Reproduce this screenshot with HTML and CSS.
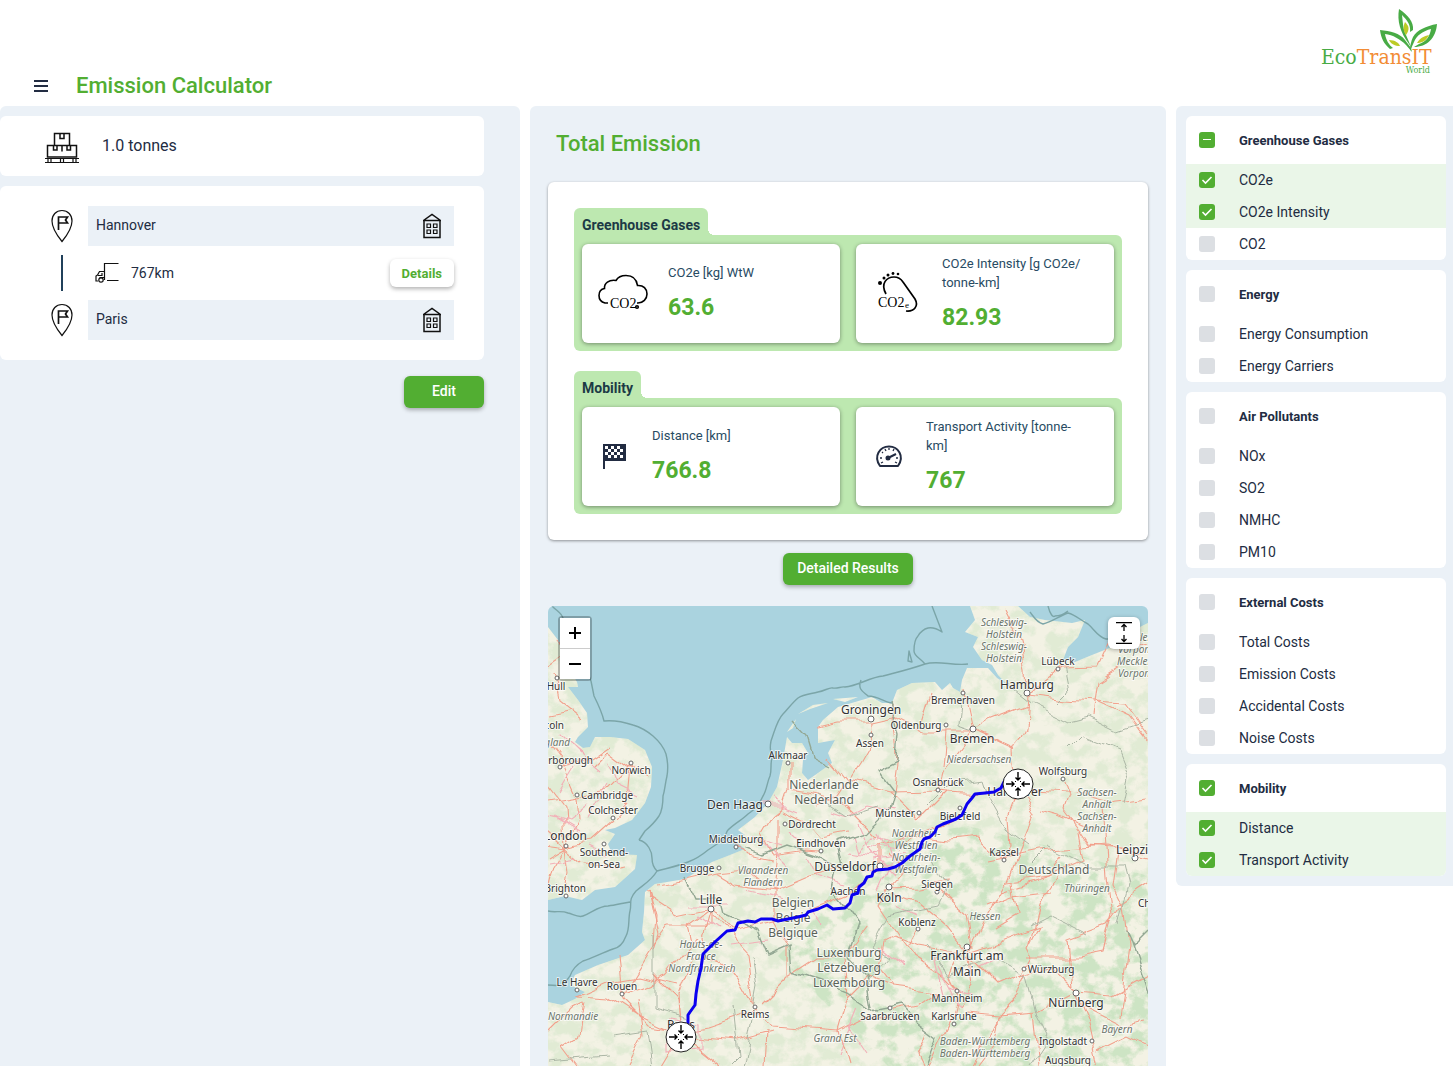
FILE: index.html
```html
<!DOCTYPE html>
<html lang="en">

<head>
    <meta charset="utf-8">
    <title>Emission Calculator</title>
    <link rel="stylesheet" href="styles.css">
</head>

<body>
    <svg class="sprite" aria-hidden="true">
        <symbol id="pin" viewBox="0 0 22 34">
            <path d="M11 1.500C5 1.500 1 6 1 12c0 7 5.500 15 10 20.500C15.500 27 21 19 21 12 21 6 17 1.500 11 1.500z" />
            <path d="M7.500 21V8h9l-2 3 2 3h-9" stroke-width="1.700" />
        </symbol>
        <symbol id="building" viewBox="0 0 18 26">
            <path d="M1 7v17.500h16V7M.500 7.500h17L9 1.500z" stroke-width="1.500" />
            <path d="M4 11h3.500v3.500H4zM10.500 11H14v3.500h-3.500zM4 17h3.500v3.500H4zM10.500 17H14v3.500h-3.500z" />
        </symbol>
        <symbol id="target" viewBox="-16 -16 32 32">
            <circle r="15" fill="#fff" stroke="#222" stroke-width="1" />
            <path d="M0-12v8M-2.500-6.500 0-4l2.500-2.500M0 12V4M-2.500 6.500 0 4l2.500 2.500M-12 0h8M-6.500-2.500-4 0l-2.500 2.500M12 0H4M6.500-2.500 4 0l2.500 2.500" fill="none" stroke="#000" stroke-width="1.400" />
            <path d="M-3-3l1 1M3-3l-1 1M-3 3l1-1M3 3l-1-1" stroke="#000" stroke-width="1" />
        </symbol>
    </svg>

    <div class="app">
        <header class="header">
            <div class="title-bar">
                <button class="menu" type="button" aria-label="Menu"><span></span><span></span><span></span></button>
                <h1>Emission Calculator</h1>
            </div>
            <a href="#" class="logo" aria-label="EcoTransIT World">
                <svg width="120" height="68" viewBox="0 0 120 68">
                    <g fill="#48ab45">
                        <path d="M78 1c9 6 15 13 14 21l-3 2c1-7-3-12-8-17 1 8 1 14 4 20l6 14-3-5c-9-12-12-23-10-35z" />
                        <path d="M59 22c10 1 20 3 25 10l6 8 1 4-6-7c-6-6-13-10-21-11 1 6 4 11 8 14l-3 1c-6-5-9-11-10-19z" />
                        <path d="M116 16c-11 2-20 6-24 13-2 4-3 9-3 14l4-9c3-7 9-11 17-13-1 7-5 13-12 15l-5 3c13 0 22-9 23-23z" />
                    </g>
                    <g fill="#bccb25">
                        <path d="M84 14c4 4 5 7 1 13-3-4-3-8-1-13z" />
                        <path d="M68 32c6 0 10 3 11 6-5 0-9-2-11-6z" />
                        <path d="M108 27c-5 1-9 3-12 8 5 0 9-2 12-8z" />
                    </g>
                    <text x="0" y="56" class="logo-name"><tspan fill="#48ab45">Eco</tspan><tspan fill="#f28c35">TransIT</tspan></text>
                    <text x="109" y="65" class="logo-sub" text-anchor="end" fill="#48ab45">World</text>
                </svg>
            </a>
        </header>

        <main class="columns">
            <section class="panel request">
                <div class="card cargo">
                    <svg class="line-icon" width="34" height="32" viewBox="0 0 34 32">
                        <path d="M9.500 13V1.500h15V13M15 2v4.500h4V2M2.500 13.500h29V25h-29zM8.500 14v4h3.500v-4M17 14v5.500M22 14v4h3.500v-4" stroke-width="1.500" />
                        <path d="M0 26.500h34M0 30.500h34M3 27v3M6 27v3M15.500 27v3M18.500 27v3M28 27v3M31 27v3" />
                    </svg>
                    <span>1.0 tonnes</span>
                </div>
                <div class="card route">
                    <svg class="line-icon" width="22" height="34"><use href="#pin" /></svg>
                    <div class="place">Hannover <svg class="line-icon" width="18" height="26"><use href="#building" /></svg></div>
                    <div class="route-line"></div>
                    <div class="leg">
                        <svg class="line-icon" width="24" height="20" viewBox="0 0 24 20">
                            <path d="M23.500.500h-14V17M12 17.500h11.500M9 8.500H4.500L2.500 12 1 13v5h2M3 12.500h4V10M4.500 14.500h5" />
                            <circle cx="6" cy="17" r="2.200" />
                        </svg>
                        <span>767km</span>
                        <button type="button" class="btn btn-light">Details</button>
                    </div>
                    <svg class="line-icon" width="22" height="34"><use href="#pin" /></svg>
                    <div class="place">Paris <svg class="line-icon" width="18" height="26"><use href="#building" /></svg></div>
                </div>
                <button type="button" class="btn btn-edit">Edit</button>
            </section>

            <section class="panel results">
                <h2>Total Emission</h2>
                <div class="summary">
                    <div class="group">
                        <h3>Greenhouse Gases</h3>
                        <div class="tiles">
                            <div class="tile">
                                <svg width="50" height="40" viewBox="0 0 50 40" fill="none" stroke="#000" stroke-width="1.600">
                                    <path d="M10 29H7C3 28 1 25 1 21.500c0-4 2-6.500 5.500-7C6 9 11 5.500 18 6.500 20 3 24 1.500 28 1.500c6 0 10.500 3 11.500 10 6-.500 9.500 3.500 9.500 8.500s-4 9-9 9h-1" />
                                    <text x="12" y="34" class="icon-text">CO2</text>
                                    <circle cx="39" cy="33" r="1.300" />
                                </svg>
                                <div>
                                    <p>CO2e [kg] WtW</p>
                                    <strong>63.6</strong>
                                </div>
                            </div>
                            <div class="tile">
                                <svg width="50" height="44" viewBox="0 0 50 44" fill="none" stroke="#000" stroke-width="1.700">
                                    <path d="M14 22c-6-11 1-17 8-17 4 0 7 2 9 5l12 17c4 7-1 13-9 12" />
                                    <g fill="#000" stroke="none">
                                        <circle cx="8" cy="11" r="2" />
                                        <circle cx="12" cy="6" r="1.500" />
                                        <circle cx="16" cy="3" r="1.500" />
                                        <circle cx="21" cy="1.500" r="1.400" />
                                        <circle cx="26" cy="2" r="1.300" />
                                    </g>
                                    <text x="6" y="35" class="icon-text">CO2</text>
                                    <text x="33" y="36" class="icon-sub">e</text>
                                </svg>
                                <div>
                                    <p>CO2e Intensity [g CO2e/ tonne-km]</p>
                                    <strong>82.93</strong>
                                </div>
                            </div>
                        </div>
                    </div>
                    <div class="group">
                        <h3>Mobility</h3>
                        <div class="tiles">
                            <div class="tile">
                                <svg width="34" height="34" viewBox="0 0 34 34">
                                    <path d="M5 4h23v17H7v8H5z" fill="#222c42" />
                                    <path d="M7 6h3v3H7zM13 6h3v3h-3zM19 6h3v3h-3zM10 9h3v3h-3zM16 9h3v3h-3zM22 9h3v3h-3zM7 12h3v3H7zM13 12h3v3h-3zM19 12h3v3h-3zM10 15h3v3h-3zM16 15h3v3h-3zM22 15h3v3h-3z" fill="#fff" />
                                </svg>
                                <div>
                                    <p>Distance [km]</p>
                                    <strong>766.8</strong>
                                </div>
                            </div>
                            <div class="tile">
                                <svg width="34" height="34" viewBox="0 0 34 34" fill="none" stroke="#222c42" stroke-width="2">
                                    <path d="M8 26C1 16 8 6.500 17 6.500S33 16 26 26z" stroke-linejoin="round" />
                                    <circle cx="16" cy="18" r="1.500" fill="#222c42" />
                                    <path d="M16 18l8-4" />
                                    <path d="M8 18h2M24 18h2M10 12l1 1M13 9l1 2M17 8v2M22 9l-1 2M9 23l2-1M25 23l-2-1" stroke-width="1.300" />
                                </svg>
                                <div>
                                    <p>Transport Activity [tonne-km]</p>
                                    <strong>767</strong>
                                </div>
                            </div>
                        </div>
                    </div>
                </div>
                <button type="button" class="btn btn-results">Detailed Results</button>

                <div class="map">
                    <svg class="map-canvas" viewBox="0 0 600 460" preserveAspectRatio="xMinYMin slice">
                        <defs>
                            <filter id="rough" x="0" y="0" width="600" height="460" filterUnits="userSpaceOnUse" color-interpolation-filters="sRGB">
                                <feTurbulence type="fractalNoise" baseFrequency=".03" numOctaves="2" seed="4" />
                                <feDisplacementMap in="SourceGraphic" scale="16" xChannelSelector="R" yChannelSelector="G" />
                            </filter>
                            <filter id="forest" x="0" y="0" width="600" height="460" filterUnits="userSpaceOnUse" color-interpolation-filters="sRGB">
                                <feTurbulence type="fractalNoise" baseFrequency=".06 .07" numOctaves="5" seed="11" />
                                <feColorMatrix values="0 0 0 0 .77  0 0 0 0 .88  0 0 0 0 .74  0 5 0 0 -2.100" />
                                <feComposite in2="SourceGraphic" operator="in" />
                            </filter>
                            <clipPath id="land-clip"><use href="#land" /></clipPath>
                        </defs>
                        <rect width="600" height="460" fill="#aad3df" />
                        <path id="land" fill="#f3f2e4" d="M0 21 10 34 17 57 29 76 30 81 20 81 30 94 39 107 40 121 30 131 27 136 35 142 42 141 47 131 62 131 80 133 97 144 104 161 103 181 97 197 84 214 67 222 57 224 67 228 60 238 64 248 89 249 87 263 67 281 47 284 34 294 17 290 0 294z
                            M422 0 427 14 417 26 430 31 425 41 434 54 444 59 450 69 460 79 449 72 440 62 419 62 414 74 412 86 405 82 402 77 394 84 387 76 364 77 349 84 344 97 334 97 324 91 297 99 290 101 275 114 270 121 270 137 287 134 280 147 284 157 270 167 260 174 254 167 255 154 260 147 254 137 244 137 239 131 235 154 229 181 220 197 207 211 190 224 197 229 184 232 197 243 177 251 164 256 137 273 107 278 97 286 96 306 94 326 97 334 80 349 50 359 27 369 22 379 37 386 27 393 14 399 0 396V460H600V17L580 27 564 41 544 49 527 56 515 54 520 41 530 31 537 14 524 17 497 14 482 11 470 0z
                            M239 126 248 113 245 122z M250 108 265 99 280 97 262 103z M285 93 310 91 297 96z" />
                        <g clip-path="url(#land-clip)">
                            <g filter="url(#forest)">
                                <path opacity=".4" d="M0 0H600V460H0z" />
                                <path opacity=".7" d="M320 235 420 220 500 240 600 270V460H340L230 350 260 320z" />
                            </g>
                        </g>
                        <g class="roads" filter="url(#rough)">
                            <path d="M17 240 0 225M17 240 30 215 28 190 15 160 0 140M17 240 40 235 62 215M17 240 35 255 60 262 80 258M17 240 20 265 17 288M17 240 5 260 0 280M29 190 60 185 83 162 100 170M45 160 60 145 83 162M0 195 29 190M12 160 40 155 62 140M5 70 10 95 35 115M0 110 25 105M17 240 0 250M65 212 80 195 83 162M17 240-5 237M17 240 15 200 0 180M0 60 15 50 8 35" />
                            <path d="M479 88 478 60 470 30 455 0M479 88 510 63 550 62 565 30 600 40M479 88 520 93 575 97 600 130M479 88 477 120 465 145 468 180M479 100 440 115 425 125 400 125 375 125 345 110 323 115 290 115 270 120M425 125 416 85M468 145 425 125 395 165 390 184 400 185 440 187 470 183 530 187 560 195 600 190M390 184 340 185 300 175 280 150M425 125 455 138M398 125 395 160M375 118 385 85M470 183 485 205 480 225 470 250 460 275 440 310 420 345" />
                            <path d="M470 183 460 210 462 240 456 255 430 232 400 235 365 230 350 240M570 62 550 75 545 110M548 95 580 110 600 135M515 173 520 190 515 205 530 225 540 240 600 245M492 205 510 210 545 225M530 226 535 255 500 270 460 275M600 250 560 240 490 245 440 255M415 210 380 225 350 232 330 240M370 215 355 200 340 185M370 215 400 185M345 185 350 150 345 100M322 137 323 115M323 137 310 160 290 190 268 200M240 185 235 200 225 208M240 155 240 185 270 190 300 200 330 230M235 203 260 215 273 230 300 225" />
                            <path d="M225 208 215 225 225 250 260 245 273 246M230 210 230 240 225 280 225 315M184 236 200 250 225 255M170 268 190 280 225 285 260 270 297 262M170 268 200 265 225 285M105 280 140 275 170 268M100 290 130 310 163 303 180 325 225 315 260 306 300 290 330 264 330 240M163 303 170 285M163 303 155 330 160 350 190 370 207 400 225 420 290 425 320 410 342 415M163 303 140 320 145 340M105 340 120 320 163 320 163 303M100 285 110 330 105 345" />
                            <path d="M225 315 240 340 240 370 215 395M240 370 270 350 297 350 320 320M297 350 300 390 290 425 300 460M133 425 130 390 145 350M133 425 160 420 190 410 207 402M133 430 190 435 225 425M133 430 170 460M133 430 115 460M133 430 90 410 60 390 30 388M133 425 100 420 75 395 70 350M75 388 105 340 107 310 100 285M75 388 120 370 150 330M30 388 60 375 90 370 130 380M35 395 30 430 15 440 30 460M90 395 95 430 80 460M0 425 25 400 35 395M105 370 130 395 133 425M220 425 218 460M207 402 200 350 163 310" />
                            <path d="M341 281 355 265 335 250M341 281 370 280 400 275M341 281 330 300 350 330 365 350 395 370 410 385M345 285 370 295 400 320 420 345M390 285 420 310 425 340M419 345 400 345 370 340 345 330 335 335 330 360 345 380 390 385M370 322 360 340M420 345 450 335 490 320 480 340 485 350 475 370 505 362 530 385M480 367 450 380 420 350M465 275 470 310 445 325M480 350 530 350 555 345 565 310 560 270 555 200M455 285 500 270 515 250M570 245 565 280 575 300 560 320 520 335 525 380M440 300 465 290 505 285M510 270 490 300 480 340" />
                            <path d="M528 387 540 415 550 460M528 387 565 390 600 370M480 367 470 390 450 410 430 450 425 460M409 390 400 370 410 350 419 345M409 390 405 410 390 440 380 460M390 385 370 400 345 405M415 405 450 408 490 405 525 387M450 408 445 440 430 460M300 390 320 370 345 380M535 400 575 420 600 415M575 300 580 340 575 380 570 410M380 425 370 450 375 460M550 445 580 430 600 440M600 280 570 300M485 405 490 460M422 350 425 380 410 400" />
                            <path class="minor" d="M285 205 300 210 320 200 345 205M305 230 310 245 325 230 340 235M300 245 330 250M330 225 340 255M355 228 330 285M210 200 240 200M205 230 235 240M225 195 250 205M310 265 340 260M140 300 180 300M150 310 170 325M330 340 355 360M385 350 395 390M300 420 320 450M310 400 290 450M120 410 150 415 150 440 120 445 120 410M260 250 270 270 300 280M20 140 50 165M60 180 40 215M25 160 10 185M40 240 60 250M0 255 30 250M5 210 30 225M390 360 410 400M400 380 425 390M310 215 325 250 345 270M320 240 350 245M325 255 355 250M240 225 255 240M215 235 240 260M200 285 240 295M260 300 275 320M180 340 220 335M60 155 70 180 90 190M0 210 20 215 40 200M10 130 30 150M350 300 370 310M430 360 450 350" />
                        </g>
                        <g class="borders" filter="url(#rough)">
                            <path d="M137 273 145 290 170 290 175 310 210 325 220 350 243 340 245 365 275 375 300 385 330 405 355 400 370 415 390 430 378 460M197 243 215 250 240 240 270 250 290 262 285 285 298 302 310 320 300 350 320 370 325 400M344 97 352 130 350 155 330 165 345 185 340 205 320 225 290 235 295 260M600 325 585 340 578 325 600 390M246 115 260 130 266 150 285 160" />
                            <path class="region" d="M412 95 410 120 425 125M460 79 480 95 520 115 540 110 570 125 600 115M515 60 520 85 510 95M520 145 535 130 570 145 580 170 575 195M380 200 400 180 435 175 440 190 460 225 480 240M320 375 340 350 325 340 340 310 390 300 400 280 385 250M480 260 500 240 540 260 575 260 580 280 570 320M480 320 500 310 540 330M380 340 400 370 440 350 480 370 490 410 500 430 480 460M195 460 210 380 205 350M105 330 105 400 140 410M185 400 190 450 180 460M65 430 100 425 105 460M0 455 60 450M270 190 300 210 330 200" />
                        </g>
                        <g class="sea-lines">
                            <path d="M4 0C8 4 12 6 14 10 20 22 24 32 30 45 36 56 40 66 43 75L46 90C50 98 54 106 56 115 66 114 76 116 85 119 92 121 99 125 105 130 113 137 116 142 118 148 120 156 120 164 119 170 117 178 117 184 115 190 115 198 114 205 111 210 107 216 103 220 97 225L91 234M175 234C178 230 178 226 180 224 187 217 194 214 200 208 208 203 212 197 215 190 219 184 219 176 222 170 224 164 222 158 224 152 222 146 222 140 223 135 227 124 229 114 235 108 240 103 244 97 250 92 256 88 263 88 270 86 277 85 281 81 285 82 290 83 293 80 297 81 310 80 322 71 335 70 350 66 363 63 377 58M377 58C372 52 366 50 366 45 366 37 367 33 370 30 373 25 376 23 380 22 386 21 391 24 394 26L384 0M377 58C390 54 405 60 420 58M313 74C309 84 316 86 320 90 330 90 336 96 344 97M361 45 364 56 360 55z" />
                            <path d="M91 234C100 236 104 246 104 252 104 258 106 262 109 265 104 274 95 279 88 285 80 294 84 297 82 305 80 313 82 323 78 330 75 338 71 342 65 343 54 347 44 352 35 355 28 359 24 364 22 370 18 374 18 376 17 380L0 379M109 265C120 262 130 260 140 256 148 253 154 249 160 244L175 234M0 305C7 307 13 304 20 307 25 308 30 312 35 310 44 307 50 300 60 300 68 299 75 297 82 296M482 6C486 11 488 16 495 18 504 16 511 10 520 7 528 9 532 14 540 18 546 23 550 31 558 33L575 33M500 0C502 8 505 12 507 10 512 10 516 8 520 5" />
                        </g>
                        <g class="dots">
                            <circle cx="9" cy="72" r="2" /><circle cx="83" cy="157" r="2" /><circle cx="12" cy="161" r="2" /><circle cx="29" cy="189" r="2" /><circle cx="65" cy="212" r="2" /><circle cx="18" cy="240" r="2" /><circle cx="56" cy="238" r="2" /><circle cx="18" cy="290" r="2" /><circle cx="240" cy="157" r="2" /><circle cx="220" cy="198" r="3" /><circle cx="237" cy="218" r="2" /><circle cx="188" cy="241" r="2" /><circle cx="273" cy="245" r="2" /><circle cx="171" cy="262" r="2" /><circle cx="163" cy="303" r="3" /><circle cx="74" cy="388" r="2" /><circle cx="29" cy="384" r="2" /><circle cx="207" cy="401" r="2" />
                            <circle cx="323" cy="113" r="3" /><circle cx="323" cy="129" r="2" /><circle cx="398" cy="119" r="2" /><circle cx="415" cy="87" r="2" /><circle cx="425" cy="123" r="3" /><circle cx="479" cy="87" r="3" /><circle cx="510" cy="63" r="2" /><circle cx="515" cy="173" r="2" /><circle cx="390" cy="184" r="2" /><circle cx="371" cy="207" r="2" /><circle cx="412" cy="202" r="2" /><circle cx="332" cy="260" r="3" /><circle cx="341" cy="281" r="3" /><circle cx="389" cy="286" r="2" /><circle cx="456" cy="254" r="2" /><circle cx="587" cy="252" r="3" /><circle cx="370" cy="323" r="2" /><circle cx="419" cy="341" r="3" /><circle cx="476" cy="363" r="2" /><circle cx="528" cy="387" r="3" /><circle cx="409" cy="385" r="2" /><circle cx="342" cy="402" r="2" /><circle cx="406" cy="418" r="2" /><circle cx="544" cy="435" r="2" />
                        </g>
                        <g class="labels">
                            <text x="510" y="59">Lübeck</text>
                            <text x="415" y="98">Bremerhaven</text>
                            <text x="368" y="123">Oldenburg</text>
                            <text x="322" y="141">Assen</text>
                            <text x="390" y="180">Osnabrück</text>
                            <text x="515" y="169">Wolfsburg</text>
                            <text x="347" y="211">Münster</text>
                            <text x="412" y="214">Bielefeld</text>
                            <text x="240" y="153">Alkmaar</text>
                            <text x="83" y="168">Norwich</text>
                            <text x="8" y="84">Hull</text>
                            <text x="59" y="193">Cambridge</text>
                            <text x="65" y="208">Colchester</text>
                            <text x="56" y="250">Southend-</text>
                            <text x="56" y="262">on-Sea</text>
                            <text x="188" y="237">Middelburg</text>
                            <text x="273" y="241">Eindhoven</text>
                            <text x="264" y="222">Dordrecht</text>
                            <text x="149" y="266">Brugge</text>
                            <text x="300" y="289">Aachen</text>
                            <text x="389" y="282">Siegen</text>
                            <text x="456" y="250">Kassel</text>
                            <text x="369" y="320">Koblenz</text>
                            <text x="503" y="367">Würzburg</text>
                            <text x="409" y="396">Mannheim</text>
                            <text x="342" y="414">Saarbrücken</text>
                            <text x="406" y="414">Karlsruhe</text>
                            <text x="515" y="439">Ingolstadt</text>
                            <text x="520" y="458">Augsburg</text>
                            <text x="207" y="412">Reims</text>
                            <text x="29" y="380">Le Havre</text>
                            <text x="74" y="384">Rouen</text>
                            <text x="16" y="123" class="end">Lincoln</text>
                            <text x="45" y="158" class="end">Peterborough</text>
                            <text x="38" y="286" class="end">Brighton</text>
                            <text x="590" y="301" class="start">Chemnitz</text>
                            <g class="city">
                                <text x="479" y="83">Hamburg</text>
                                <text x="323" y="108">Groningen</text>
                                <text x="424" y="137">Bremen</text>
                                <text x="467" y="190">Hannover</text>
                                <text x="187" y="203">Den Haag</text>
                                <text x="39" y="234" class="end">London</text>
                                <text x="163" y="298">Lille</text>
                                <text x="297" y="265">Düsseldorf</text>
                                <text x="341" y="296">Köln</text>
                                <text x="568" y="248" class="start">Leipzig</text>
                                <text x="419" y="354">Frankfurt am</text>
                                <text x="419" y="370">Main</text>
                                <text x="528" y="401">Nürnberg</text>
                                <text x="133" y="423">Paris</text>
                            </g>
                            <g class="country">
                                <text x="276" y="183">Niederlande</text>
                                <text x="276" y="198">Nederland</text>
                                <text x="245" y="301">Belgien</text>
                                <text x="245" y="316">België</text>
                                <text x="245" y="331">Belgique</text>
                                <text x="506" y="268">Deutschland</text>
                                <text x="301" y="351">Luxemburg</text>
                                <text x="301" y="366">Lëtzebuerg</text>
                                <text x="301" y="381">Luxembourg</text>
                            </g>
                            <g class="state">
                                <text x="456" y="20">Schleswig-</text>
                                <text x="456" y="32">Holstein</text>
                                <text x="456" y="44">Schleswig-</text>
                                <text x="456" y="56">Holstein</text>
                                <text x="569" y="35" class="start">Mecklenburg-</text>
                                <text x="570" y="47" class="start">Vorpommern</text>
                                <text x="569" y="59" class="start">Mecklenburg-</text>
                                <text x="570" y="71" class="start">Vorpommern</text>
                                <text x="431" y="157">Niedersachsen</text>
                                <text x="549" y="190">Sachsen-</text>
                                <text x="549" y="202">Anhalt</text>
                                <text x="549" y="214">Sachsen-</text>
                                <text x="549" y="226">Anhalt</text>
                                <text x="368" y="231">Nordrhein-</text>
                                <text x="368" y="243">Westfalen</text>
                                <text x="368" y="255">Nordrhein-</text>
                                <text x="368" y="267">Westfalen</text>
                                <text x="22" y="140" class="end">England</text>
                                <text x="215" y="268">Vlaanderen</text>
                                <text x="215" y="280">Flandern</text>
                                <text x="153" y="342">Hauts-de-</text>
                                <text x="153" y="354">France</text>
                                <text x="154" y="366">Nordfrankreich</text>
                                <text x="539" y="286">Thüringen</text>
                                <text x="437" y="314">Hessen</text>
                                <text x="437" y="439">Baden-Württemberg</text>
                                <text x="437" y="451">Baden-Württemberg</text>
                                <text x="569" y="427">Bayern</text>
                                <text x="287" y="436">Grand Est</text>
                                <text x="25" y="414">Normandie</text>
                            </g>
                        </g>
                        <path class="track" d="M457 174 453 182 446 186 437 187 427 188 424 192 419 198 414 209 408 213 395 218 389 221 387 226 382 231 376 233 374 236 372 243 362 250 354 257 347 261 340 263 329 264 325 266 324 270 319 271 316 277 311 281 310 287 304 289 302 297 297 302 285 303 279 299 270 303 260 306 258 309 250 311 230 315 224 313 213 313 207 316 200 315 190 317 187 324 179 325 168 335 163 340 155 348 153 362 150 375 148 388 147 399 142 406 140 409 140 418" />
                        <use href="#target" x="454" y="162" width="32" height="32" />
                        <use href="#target" x="117" y="415" width="32" height="32" />
                    </svg>
                    <div class="zoom">
                        <button type="button" aria-label="Zoom in"><svg width="14" height="14" viewBox="0 0 14 14"><path d="M7 1v12M1 7h12" /></svg></button>
                        <button type="button" aria-label="Zoom out"><svg width="14" height="14" viewBox="0 0 14 14"><path d="M1 7h12" /></svg></button>
                    </div>
                    <button type="button" class="expand" aria-label="Expand map">
                        <svg width="16" height="22" viewBox="0 0 16 22" fill="none" stroke="#000" stroke-width="1.300">
                            <path d="M0 .700h16M0 21.300h16M8 2.500v6.500M5.500 5 8 2.500 10.500 5M8 19.500V13M5.500 17 8 19.500l2.500-2.500" />
                        </svg>
                    </button>
                </div>
            </section>

            <aside class="panel filters">
                <div class="card">
                    <label class="head"><input type="checkbox" class="partial" checked>Greenhouse Gases</label>
                    <label class="on"><input type="checkbox" checked>CO2e</label>
                    <label class="on"><input type="checkbox" checked>CO2e Intensity</label>
                    <label><input type="checkbox">CO2</label>
                </div>
                <div class="card">
                    <label class="head"><input type="checkbox">Energy</label>
                    <label><input type="checkbox">Energy Consumption</label>
                    <label><input type="checkbox">Energy Carriers</label>
                </div>
                <div class="card">
                    <label class="head"><input type="checkbox">Air Pollutants</label>
                    <label><input type="checkbox">NOx</label>
                    <label><input type="checkbox">SO2</label>
                    <label><input type="checkbox">NMHC</label>
                    <label><input type="checkbox">PM10</label>
                </div>
                <div class="card">
                    <label class="head"><input type="checkbox">External Costs</label>
                    <label><input type="checkbox">Total Costs</label>
                    <label><input type="checkbox">Emission Costs</label>
                    <label><input type="checkbox">Accidental Costs</label>
                    <label><input type="checkbox">Noise Costs</label>
                </div>
                <div class="card">
                    <label class="head"><input type="checkbox" checked>Mobility</label>
                    <label class="on"><input type="checkbox" checked>Distance</label>
                    <label class="on"><input type="checkbox" checked>Transport Activity</label>
                </div>
            </aside>
        </main>
    </div>
</body>

</html>
```
FILE: styles.css
```css
* {
    box-sizing: border-box;
}

body {
    margin: 0;
    background-color: #ffffff;
    color: #222c42;
    font-family: Roboto, "Noto Sans", sans-serif;
    font-size: 14px;
}

h1,
h2,
h3,
p {
    margin: 0;
}

button {
    font-family: inherit;
    cursor: pointer;
}

.sprite {
    position: absolute;
    width: 0;
    height: 0;
}

.app {
    display: flex;
    flex-direction: column;
    height: 100vh;
    padding-bottom: 1px;
}

.header {
    display: flex;
    justify-content: space-between;
    padding: 8px 12px 7px 32px;
}

.title-bar {
    display: flex;
    align-items: flex-end;
    gap: 26px;
}

h1,
h2 {
    color: #52ae32;
    font-size: 22px;
    font-weight: 500;
    line-height: 26px;
}

.menu {
    display: flex;
    flex-direction: column;
    align-items: center;
    justify-content: center;
    gap: 3px;
    width: 18px;
    height: 26px;
    padding: 0;
    border: 0;
    background: none;
}

.menu span {
    width: 14px;
    height: 2px;
    background-color: #222c42;
}

.logo {
    height: 91px;
}

.logo-name {
    font-family: "DejaVu Serif Condensed", "DejaVu Serif", serif;
    font-size: 21px;
}

.logo-sub {
    font-family: "DejaVu Serif Condensed", "DejaVu Serif", serif;
    font-size: 9px;
}

.columns {
    display: grid;
    grid-template-columns: 520fr 636fr 277fr;
    gap: 10px;
    flex: 1;
    min-height: 0;
}

.panel {
    min-width: 0;
    border-radius: 6px;
    background-color: #ebf1f7;
}

.card {
    border-radius: 6px;
    background-color: #ffffff;
}

.line-icon {
    fill: none;
    stroke: #111111;
    stroke-width: 1.2px;
}

/* Request */

.request {
    display: flex;
    flex-direction: column;
    gap: 10px;
    padding: 10px 36px 0 0;
    border-bottom-left-radius: 0;
    border-bottom-right-radius: 0;
}

.cargo {
    display: flex;
    align-items: center;
    gap: 23px;
    height: 60px;
    padding: 0 0 2px 45px;
    font-size: 16px;
}

.cargo svg {
    margin-top: 6px;
}

.route {
    display: grid;
    grid-template-columns: 28px 1fr;
    grid-template-rows: 40px 54px 40px;
    column-gap: 12px;
    align-items: center;
    justify-items: center;
    padding: 20px 30px 20px 48px;
}

.place,
.leg {
    display: flex;
    align-items: center;
    width: 100%;
}

.place {
    justify-content: space-between;
    height: 40px;
    padding: 0 13px 2px 8px;
    background-color: #ebf1f7;
}

.place svg {
    margin-top: 2px;
}

.leg {
    gap: 12px;
    padding-left: 7px;
}

.leg button {
    margin-left: auto;
}

.route-line {
    width: 2px;
    height: 36px;
    background-color: #20405a;
}

.btn {
    border: 0;
    border-radius: 6px;
    background-color: #52ae32;
    box-shadow: 0 2px 4px rgba(0, 0, 0, 0.3);
    color: #ffffff;
    font-size: 14px;
    font-weight: 500;
    height: 32px;
    padding: 0 14px 2px;
}

.btn-light {
    height: 28px;
    padding: 0 12px;
    background-color: #ffffff;
    color: #52ae32;
    font-size: 13px;
    font-weight: 700;
}

.btn-edit {
    align-self: flex-end;
    width: 80px;
    margin-top: 6px;
}

/* Results */

.results {
    display: flex;
    flex-direction: column;
    align-items: center;
    padding: 0 18px;
    border-bottom-left-radius: 0;
    border-bottom-right-radius: 0;
}

.results h2 {
    align-self: flex-start;
    padding: 25px 8px;
}

.summary {
    display: flex;
    flex-direction: column;
    gap: 20px;
    width: 100%;
    padding: 26px;
    border-radius: 6px;
    background-color: #ffffff;
    box-shadow: 0 1px 3px rgba(0, 0, 0, 0.4);
}

.group h3 {
    position: relative;
    width: fit-content;
    height: 27px;
    padding: 8px 8px 0;
    border-radius: 6px 6px 0 0;
    background-color: #bde8b0;
    color: #1c3a45;
    font-size: 14px;
    font-weight: 700;
    line-height: 18px;
}

.group h3::after {
    content: "";
    position: absolute;
    right: -6px;
    bottom: 0;
    width: 6px;
    height: 6px;
    background: radial-gradient(circle at 100% 0, transparent 6px, #bde8b0 6px);
}

.tiles {
    display: grid;
    grid-template-columns: 1fr 1fr;
    gap: 16px;
    padding: 9px 8px 8px;
    border-radius: 0 6px 6px 6px;
    background-color: #bde8b0;
}

.tile {
    display: flex;
    align-items: center;
    gap: 20px;
    height: 99px;
    padding: 0 24px 0 16px;
    border-radius: 6px;
    background-color: #ffffff;
    box-shadow: 0 1px 4px rgba(0, 0, 0, 0.4);
}

.tile svg {
    flex: none;
}

.tile p {
    color: #284b63;
    font-size: 13px;
    line-height: 19px;
}

.tile strong {
    display: block;
    margin-top: 10px;
    color: #52ae32;
    font-size: 23px;
    font-weight: 700;
    line-height: 32px;
}

.icon-text,
.icon-sub {
    fill: #000000;
    stroke: none;
    font-family: "Liberation Serif", serif;
    font-size: 14px;
}

.icon-sub {
    font-size: 9px;
}

.btn-results {
    flex: none;
    margin: 13px 0 21px;
}

/* Map */

.map {
    position: relative;
    flex: 1;
    width: 100%;
    min-height: 0;
    overflow: hidden;
    border-radius: 6px 6px 0 0;
}

.map-canvas {
    display: block;
    width: 100%;
    height: 100%;
}

.roads path {
    fill: none;
    stroke: #f2a08c;
    stroke-width: 1.1px;
}

.roads .minor {
    stroke: #f3b0b8;
}

.borders path {
    fill: none;
    stroke: #93a793;
    stroke-width: 1.4px;
}

.borders .region {
    stroke: #abb6a5;
    stroke-width: 1px;
}

.sea-lines path {
    fill: none;
    stroke: #7ba5a8;
    stroke-width: 1.4px;
    stroke-linejoin: round;
}

.dots circle {
    fill: #ffffff;
    stroke: #666666;
    stroke-width: 1px;
}

.labels text {
    fill: #333333;
    stroke: #ffffff;
    stroke-opacity: 0.7;
    stroke-width: 2px;
    stroke-linejoin: round;
    paint-order: stroke;
    font-family: "Noto Sans", sans-serif;
    font-size: 10px;
    text-anchor: middle;
}

.labels .start {
    text-anchor: start;
}

.labels .end {
    text-anchor: end;
}

.labels .city text {
    font-size: 12px;
}

.labels .country text {
    fill: #5a6259;
    font-size: 12px;
}

.labels .state text {
    fill: #6b756b;
    font-style: italic;
}

.track {
    fill: none;
    stroke: #0b00f0;
    stroke-width: 3px;
    stroke-linejoin: round;
    stroke-linecap: round;
}

.zoom {
    position: absolute;
    top: 10px;
    left: 10px;
    display: flex;
    flex-direction: column;
    border: 2px solid rgba(0, 0, 0, 0.25);
    border-radius: 4px;
    background-clip: padding-box;
}

.zoom button {
    display: flex;
    align-items: center;
    justify-content: center;
    width: 30px;
    height: 30px;
    padding: 0;
    border: 0;
    background-color: #ffffff;
}

.zoom button:first-child {
    height: 31px;
    border-bottom: 1px solid #cccccc;
}

.zoom path {
    stroke: #000000;
    stroke-width: 2px;
}

.expand {
    position: absolute;
    top: 11px;
    right: 8px;
    display: flex;
    align-items: center;
    justify-content: center;
    width: 32px;
    height: 32px;
    padding: 0;
    border: 0;
    border-radius: 6px;
    background-color: #ffffff;
    box-shadow: 0 1px 4px rgba(0, 0, 0, 0.3);
}

/* Filters */

.filters {
    display: flex;
    flex-direction: column;
    align-self: start;
    gap: 10px;
    padding: 10px 7px 10px 10px;
    border-radius: 6px 0 0 6px;
}

.filters .card {
    overflow: hidden;
}

.filters label {
    display: flex;
    align-items: center;
    gap: 24px;
    height: 32px;
    padding-left: 13px;
}

.filters .head {
    height: 48px;
    font-size: 13px;
    font-weight: 700;
}

.filters .on {
    background-color: #eaf6e8;
}

.filters input {
    appearance: none;
    width: 16px;
    height: 16px;
    margin: 0;
    border-radius: 3px;
    background-color: #dcdfe3;
}

.filters input:checked {
    background: #52ae32 url("data:image/svg+xml,%3Csvg xmlns='http://www.w3.org/2000/svg' viewBox='0 0 16 16'%3E%3Cpath d='M3.500 8l3 3 6-6' fill='none' stroke='white' stroke-width='1.600'/%3E%3C/svg%3E");
}

.filters .partial:checked {
    background-image: url("data:image/svg+xml,%3Csvg xmlns='http://www.w3.org/2000/svg' viewBox='0 0 16 16'%3E%3Cpath d='M4 7.500h8' stroke='white'/%3E%3C/svg%3E");
}
```
